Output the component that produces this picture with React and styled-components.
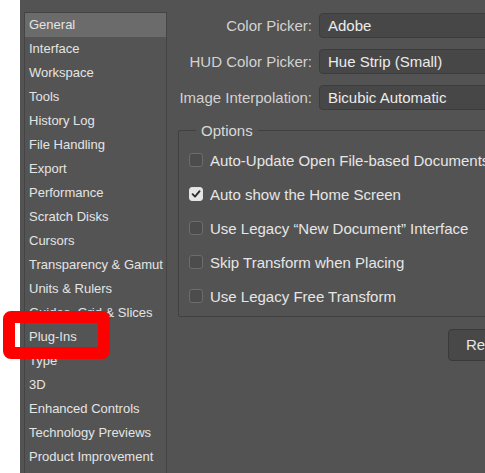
import React from 'react';
import styled, { createGlobalStyle } from 'styled-components';

const GlobalStyle = createGlobalStyle`
	html, body {
		margin: 0;
		padding: 0;
		background: #ffffff;
		overflow: hidden;
	}
	body {
		font-family: "Liberation Sans", Arial, sans-serif;
	}
`;

const categories = [
	'General',
	'Interface',
	'Workspace',
	'Tools',
	'History Log',
	'File Handling',
	'Export',
	'Performance',
	'Scratch Disks',
	'Cursors',
	'Transparency & Gamut',
	'Units & Rulers',
	'Guides, Grid & Slices',
	'Plug-Ins',
	'Type',
	'3D',
	'Enhanced Controls',
	'Technology Previews',
	'Product Improvement',
];

const pickers = [
	{ label: 'Color Picker:', value: 'Adobe' },
	{ label: 'HUD Color Picker:', value: 'Hue Strip (Small)' },
	{ label: 'Image Interpolation:', value: 'Bicubic Automatic' },
];

const options = [
	{ text: 'Auto-Update Open File-based Documents', checked: false },
	{ text: 'Auto show the Home Screen', checked: true },
	{ text: 'Use Legacy \u201cNew Document\u201d Interface', checked: false },
	{ text: 'Skip Transform when Placing', checked: false },
	{ text: 'Use Legacy Free Transform', checked: false },
];

const App = () => {
	return (
		<Page>
			<GlobalStyle />
			<Gutter />
			<Panel>
				<Sidebar>
					{categories.map((name, i) => (
						<Category key={name} selected={i === 0}>
							{name}
						</Category>
					))}
				</Sidebar>
				<Content>
					<Fields>
						{pickers.map((p) => (
							<React.Fragment key={p.label}>
								<Label>{p.label}</Label>
								<Select>{p.value}</Select>
							</React.Fragment>
						))}
					</Fields>
					<Options>
						<Legend>Options</Legend>
						{options.map((o) => (
							<OptionRow key={o.text}>
								<Box checked={o.checked}>
									{o.checked && (
										<svg width="10" height="10" viewBox="0 0 10 10">
											<path
												d="M1.6 5.2 L4 7.6 L8.6 2.2"
												fill="none"
												stroke="#2e2e2e"
												strokeWidth="1.9"
												strokeLinecap="round"
												strokeLinejoin="round"
											/>
										</svg>
									)}
								</Box>
								<OptionText>{o.text}</OptionText>
							</OptionRow>
						))}
					</Options>
					<ButtonRow>
						<Button>Reset</Button>
					</ButtonRow>
				</Content>
			</Panel>
			<Highlight />
		</Page>
	);
};

export default App;

const Page = styled.div`
	position: relative;
	display: flex;
	width: 485px;
	height: 473px;
	overflow: hidden;
`;

const Gutter = styled.div`
	flex: 0 0 20px;
	background: #ffffff;
`;

const Panel = styled.div`
	flex: 1;
	display: flex;
	align-items: flex-start;
	background: #535353;
	padding: 12px 0 0 4px;
	min-width: 0;
`;

const Sidebar = styled.div`
	flex: 0 0 143px;
	box-sizing: border-box;
	height: 480px;
	border: 1px solid #444444;
	background: #545454;
	display: flex;
	flex-direction: column;
`;

const Category = styled.div`
	height: 24px;
	line-height: 24px;
	padding-left: 4px;
	font-size: 13px;
	color: #e4e4e4;
	white-space: nowrap;
	background: ${(p) => (p.selected ? '#6b6b6b' : 'transparent')};
`;

const Content = styled.div`
	flex: 1;
	min-width: 0;
	padding-top: 1px;
`;

const Fields = styled.div`
	display: grid;
	grid-template-columns: 145px 220px;
	column-gap: 7px;
	row-gap: 11px;
	align-items: center;
`;

const Label = styled.div`
	text-align: right;
	font-size: 15px;
	color: #d2d2d2;
	white-space: nowrap;
`;

const Select = styled.div`
	box-sizing: border-box;
	height: 25px;
	line-height: 23px;
	padding-left: 8px;
	font-size: 15px;
	color: #ececec;
	background: #474747;
	border: 1px solid #3c3c3c;
	border-radius: 4px;
	white-space: nowrap;
`;

const Options = styled.fieldset`
	box-sizing: border-box;
	width: 360px;
	margin: 12px 0 0 11px;
	padding: 4px 0 3px 10px;
	border: 1px solid #414141;
	border-radius: 2px;
`;

const Legend = styled.legend`
	margin-left: 7px;
	padding: 0 5px;
	font-size: 15px;
	line-height: 17px;
	color: #d8d8d8;
`;

const OptionRow = styled.div`
	display: flex;
	align-items: center;
	height: 34px;
	gap: 7px;
	white-space: nowrap;
`;

const Box = styled.span`
	box-sizing: border-box;
	flex: 0 0 14px;
	height: 14px;
	display: flex;
	align-items: center;
	justify-content: center;
	border-radius: 3px;
	border: 1px solid ${(p) => (p.checked ? '#e2e2e2' : '#6c6c6c')};
	background: ${(p) => (p.checked ? '#e6e6e6' : '#4c4c4c')};
`;

const OptionText = styled.span`
	font-size: 15px;
	color: #e6e6e6;
`;

const ButtonRow = styled.div`
	display: flex;
	margin: 12px 0 0 281px;
`;

const Button = styled.div`
	box-sizing: border-box;
	width: 80px;
	height: 32px;
	line-height: 30px;
	padding-left: 17px;
	font-size: 15px;
	color: #e6e6e6;
	background: #484848;
	border: 1px solid #3a3a3a;
	border-radius: 4px;
	white-space: nowrap;
`;

const Highlight = styled.div`
	position: absolute;
	left: 3px;
	top: 311px;
	width: 107px;
	height: 48px;
	box-sizing: border-box;
	border: 12px solid #fd0000;
	border-radius: 8px;
	pointer-events: none;
`;
